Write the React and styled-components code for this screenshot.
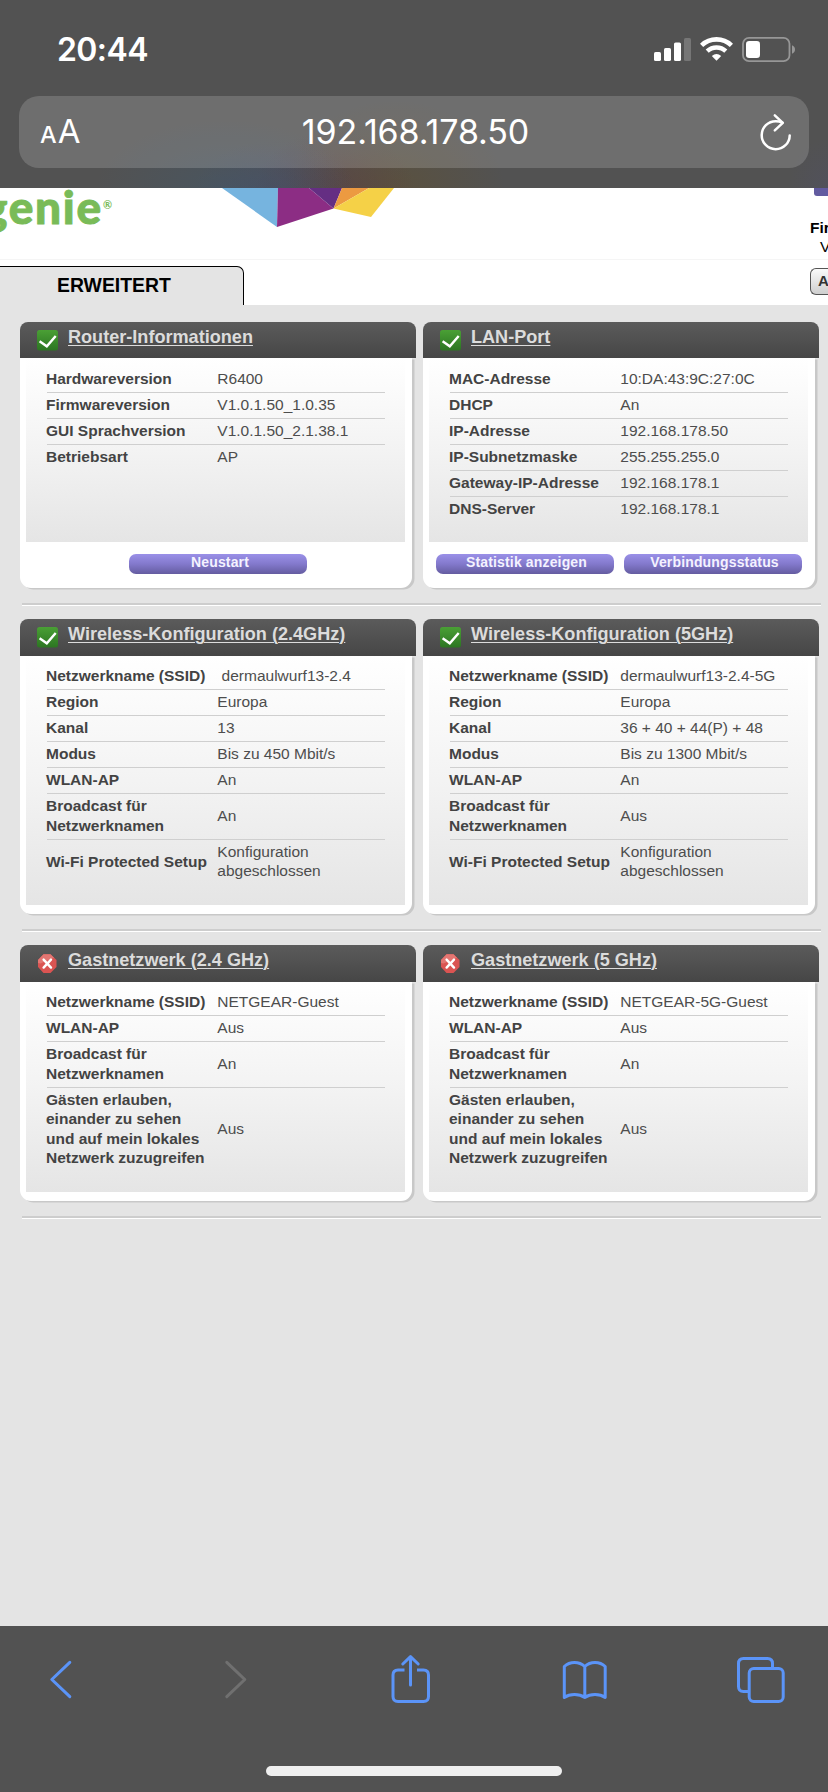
import styled, { createGlobalStyle } from "styled-components";

const GlobalStyle = createGlobalStyle`
  * {
    box-sizing: border-box;
  }
  body {
    margin: 0;
    background: #e4e4e4;
  }
`

const Screen = styled.div`
  width: 828px;
  height: 1792px;
  display: flex;
  flex-direction: column;
  overflow: hidden;
  background: #e4e4e4;
  font-family: "Liberation Sans", Arial, sans-serif;
`

/* ---------- browser top ---------- */

const BrowserTop = styled.div`
  height: 188px;
  flex: none;
  background:
    radial-gradient(ellipse 130px 70px at 225px 190px, rgba(60, 90, 115, 0.4), transparent),
    radial-gradient(ellipse 80px 50px at 275px 190px, rgba(65, 70, 120, 0.3), transparent),
    radial-gradient(ellipse 80px 60px at 335px 190px, rgba(95, 55, 60, 0.4), transparent),
    radial-gradient(ellipse 110px 90px at 395px 190px, rgba(100, 80, 40, 0.45), transparent),
    radial-gradient(ellipse 40px 50px at 828px 188px, rgba(80, 80, 105, 0.4), transparent),
    #525252;
`

const StatusBar = styled.div`
  height: 96px;
  display: flex;
  justify-content: space-between;
  padding: 30px 32px 0 57px;
`

const Clock = styled.div`
  font: 600 32px/40px Inter, sans-serif;
  letter-spacing: -0.6px;
  color: #fff;
`

const StatusIcons = styled.div`
  display: flex;
  height: 40px;
  padding-top: 6px;
`

const AddressBar = styled.div`
  height: 72px;
  margin: 0 19px;
  padding: 0 16px 0 21px;
  border-radius: 20px;
  background: rgba(255, 255, 255, 0.165);
  display: grid;
  grid-template-columns: 60px 1fr 60px;
  align-items: center;
  color: #fff;
  font-family: Inter, sans-serif;
`

const TextSize = styled.div`
  display: flex;
  align-items: baseline;
  gap: 1px;
  font-size: 33px;
  line-height: 70px;
  span {
    font-size: 23.5px;
    font-weight: 500;
  }
`

const Url = styled.div`
  text-align: center;
  font-size: 34px;
  line-height: 70px;
  letter-spacing: -0.1px;
  padding: 0 2px 2px 0;
`

const ReloadSlot = styled.div`
  display: flex;
  justify-content: flex-end;
  padding-bottom: 2px;
`

/* ---------- page header ---------- */

const PageHeader = styled.div`
  height: 71px;
  flex: none;
  display: flex;
  background: #fff;
  overflow: hidden;
`

const Brand = styled.div`
  width: 239px;
  height: 71px;
  margin-left: -17px;
  overflow: hidden;
  font: 900 46px/38px Lato, sans-serif;
  letter-spacing: 1.7px;
  -webkit-text-stroke: 0.9px #79bb58;
  color: #79bb58;
  sup {
    font-size: 11px;
    line-height: 10px;
    vertical-align: 15px;
    font-weight: 700;
    -webkit-text-stroke: 0;
  }
`

const FirmwareBox = styled.div`
  margin-left: auto;
  width: 18px;
  overflow: hidden;
  white-space: nowrap;
  font-family: "Liberation Sans", Arial, sans-serif;
  font-size: 15.5px;
  line-height: 19px;
  color: #000;
`

const CutButton = styled.div`
  height: 8px;
  margin: 0 0 22px 4px;
  border-radius: 0 0 0 3px;
  background: #625ba0;
`

const FirmwareLabel = styled.div`
  font-weight: 700;
`

const FirmwareValue = styled.div`
  padding-left: 10px;
`

const TabBar = styled.div`
  height: 46px;
  flex: none;
  display: flex;
  justify-content: space-between;
  background: #fff;
  border-top: 1px solid #f5f5f5;
  padding-top: 6px;
  overflow: hidden;
`

const Tab = styled.div`
  width: 244px;
  height: 39px;
  padding-left: 57px;
  border-top: 1.5px solid #000;
  border-right: 1.5px solid #000;
  border-top-right-radius: 7px;
  background: #e4e4e4;
  font-size: 19.4px;
  font-weight: 700;
  line-height: 36px;
  color: #000;
`

const LanguageSelect = styled.div`
  width: 18px;
  height: 27px;
  margin-top: 2px;
  padding-left: 7px;
  border: 1.5px solid #555;
  border-right: 0;
  border-radius: 6px 0 0 6px;
  background: linear-gradient(#fafafa, #cfcfcf);
  font: 700 15px/24px "Liberation Sans", Arial, sans-serif;
  color: #333;
  overflow: hidden;
`

/* ---------- cards ---------- */

const Content = styled.div`
  flex: 1;
  padding: 17px 7px 0 20px;
  background: #e4e4e4;
`

const Section = styled.div`
  display: grid;
  grid-template-columns: 395.5px 395.5px;
  column-gap: 7.5px;
  height: ${(props) => props.$height}px;
`

const Rule = styled.div`
  height: 3px;
  margin: 13px 0 13px 2px;
  border-top: 2px solid #cdcdcd;
  border-bottom: 1px solid #fff;
`

const Card = styled.div`
  display: flex;
  flex-direction: column;
`

const CardHeader = styled.div`
  height: ${(props) => props.$height}px;
  flex: none;
  display: flex;
  padding-left: 17px;
  border-radius: 8px 8px 0 0;
  background: linear-gradient(#5b5b5b, #464646);
`

const IconSlot = styled.div`
  width: 31px;
  padding-top: 8px;
`

const CardTitle = styled.a`
  height: 28px;
  font-size: 18.1px;
  font-weight: 700;
  line-height: 30px;
  color: #dcdcdc;
  text-decoration: underline;
  text-decoration-thickness: 1px;
  text-underline-offset: 1.5px;
`

const CardBody = styled.div`
  flex: 1;
  display: flex;
  flex-direction: column;
  margin: 0 3.5px 2px 0;
  padding: 0 7px 0 6px;
  border-radius: 0 0 11px 11px;
  background: #fff;
  box-shadow: 2.5px 1.5px 0.5px #c8c8c8;
`

const Table = styled.div`
  flex: 1;
  padding: 8.9px 20px 0 21px;
  background: linear-gradient(#fff, #f3f3f3 50%, #e5e5e5);
`

const Row = styled.div`
  display: grid;
  grid-template-columns: 170.5px 1fr;
  align-items: center;
  padding: 2px 0 3.5px;
  border-bottom: 1px solid ${(props) => (props.$last ? "transparent" : "#cfcfcf")};
  font-size: 15.5px;
  line-height: 19.5px;
  color: #4d4d4d;
`

const Label = styled.div`
  margin-left: -1px;
  white-space: pre;
  font-weight: 700;
  color: #434343;
`

const Value = styled.div`
  margin-left: -0.2px;
  white-space: pre;
`

const CardFooter = styled.div`
  height: ${(props) => props.$height}px;
  flex: none;
  display: flex;
  justify-content: center;
  align-items: flex-start;
  gap: 10px;
`

const PurpleButton = styled.button`
  width: 178px;
  height: 20px;
  margin-top: 12px;
  margin-left: ${(props) => (props.$single ? 5 : 0)}px;
  padding: 0 0 3px 4px;
  border: 0;
  border-radius: 7px;
  background: linear-gradient(#9a90e8, #8379cc 50%, #645ca0);
  font: 700 14px/17px "Liberation Sans", Arial, sans-serif;
  letter-spacing: 0.15px;
  color: #f4f2ff;
`

/* ---------- browser bottom ---------- */

const BrowserBottom = styled.div`
  height: 166px;
  flex: none;
  background: #525252;
`

const Toolbar = styled.div`
  height: 140px;
  display: flex;
  justify-content: space-between;
  padding: 24px 42px 0 35px;
`

const HomeIndicator = styled.div`
  width: 296px;
  height: 10px;
  margin: 0 auto;
  border-radius: 5px;
  background: #efefef;
`

const SignalIcon = () => (
  <svg width="38" height="28" viewBox="0 0 38 28" fill="#fff">
    <rect x="0" y="16" width="7" height="9" rx="1.6" />
    <rect x="10" y="12" width="7" height="13" rx="1.6" />
    <rect x="20" y="6.5" width="7" height="18.5" rx="1.6" />
    <rect x="30" y="2" width="7" height="23" rx="1.6" fill="#767676" />
  </svg>
)

const WifiIcon = () => (
  <svg width="50" height="28" viewBox="-8 0 50 28" fill="none" stroke="#fff">
    <path d="M1.6 9.3 A21.6 21.6 0 0 1 31.4 9.3" strokeWidth="4.6" />
    <path d="M7.2 15.2 A13.4 13.4 0 0 1 25.8 15.2" strokeWidth="4.4" />
    <path d="M11.8 20 Q16.5 16.2 21.2 20 L16.5 24.7 Z" fill="#fff" stroke="none" />
  </svg>
)

const BatteryIcon = () => (
  <svg width="54" height="28" viewBox="0 0 54 28">
    <rect x="1" y="1.8" width="46.5" height="23.4" rx="6" fill="none" stroke="#979797" strokeWidth="1.8" />
    <rect x="4" y="5" width="14" height="17" rx="3.2" fill="#fff" />
    <path d="M50 9.3 Q53 10.5 53 13.5 Q53 16.5 50 17.7 Z" fill="#979797" />
  </svg>
)

const ReloadIcon = () => (
  <svg width="36" height="40" viewBox="0 0 36 40" fill="none" stroke="#fff" strokeWidth="2.5" strokeLinecap="round" strokeLinejoin="round">
    <path d="M32.7 23.4 A14 14 0 1 1 18.8 9.2 Q22 9.2 25.5 10.6" />
    <path d="M17.8 3.3 L25.8 10.8 L17.8 18.3" />
  </svg>
)

const GenieGem = () => (
  <svg width="176" height="42" viewBox="0 0 176 42">
    <path d="M0 0H56L55 39Z" fill="#76b4df" />
    <path d="M56 0H87L111.5 20.5L55 39Z" fill="#8c2d84" />
    <path d="M87 0H120L111.5 20.5Z" fill="#652e83" />
    <path d="M120 0H147L111.5 20.5Z" fill="#ec9a41" />
    <path d="M147 0H172L149 29L111.5 20.5Z" fill="#f5d147" />
  </svg>
)

const CheckIcon = () => (
  <svg width="21" height="21" viewBox="0 0 21 21">
    <defs>
      <linearGradient id="check" x1="0" y1="0" x2="0" y2="1">
        <stop offset="0" stopColor="#4aa035" />
        <stop offset="1" stopColor="#2c7522" />
      </linearGradient>
    </defs>
    <rect width="21" height="20.5" rx="2.5" fill="url(#check)" />
    <path d="M2.6 11.3 L9.8 16.3 L18.7 6" fill="none" stroke="#fff" strokeWidth="2.4" />
  </svg>
)

const CrossIcon = () => (
  <svg width="21" height="21" viewBox="0 0 21 21">
    <path d="M6.5 1.3H13.5L19.5 7V14L13.5 20H6.5L1 14V7Z" fill="#da5452" />
    <path d="M6.5 1.3H13.5L17 4.7L3.5 10.5L1 10V7Z" fill="#e37672" />
    <path d="M6.6 6.6 L14 14.6 M14 6.6 L6.6 14.6" stroke="#fff" strokeWidth="2.4" strokeLinecap="round" />
  </svg>
)

const ToolIcon = ({ color = "#5b94f8", children }) => (
  <svg width="52" height="60" viewBox="0 0 52 60" fill="none" stroke={color} strokeWidth="3" strokeLinecap="round" strokeLinejoin="round">
    {children}
  </svg>
)

const sections = [
  {
    height: 268,
    header: 36,
    footer: 46,
    cards: [
      {
        title: "Router-Informationen",
        ok: true,
        rows: [
          ["Hardwareversion", "R6400"],
          ["Firmwareversion", "V1.0.1.50_1.0.35"],
          ["GUI Sprachversion", "V1.0.1.50_2.1.38.1"],
          ["Betriebsart", "AP"],
        ],
        buttons: ["Neustart"],
      },
      {
        title: "LAN-Port",
        ok: true,
        rows: [
          ["MAC-Adresse", "10:DA:43:9C:27:0C"],
          ["DHCP", "An"],
          ["IP-Adresse", "192.168.178.50"],
          ["IP-Subnetzmaske", "255.255.255.0"],
          ["Gateway-IP-Adresse", "192.168.178.1"],
          ["DNS-Server", "192.168.178.1"],
        ],
        buttons: ["Statistik anzeigen", "Verbindungsstatus"],
      },
    ],
  },
  {
    height: 297,
    header: 36.5,
    footer: 9.5,
    cards: [
      {
        title: "Wireless-Konfiguration (2.4GHz)",
        ok: true,
        rows: [
          ["Netzwerkname (SSID)", " dermaulwurf13-2.4"],
          ["Region", "Europa"],
          ["Kanal", "13"],
          ["Modus", "Bis zu 450 Mbit/s"],
          ["WLAN-AP", "An"],
          ["Broadcast für\nNetzwerknamen", "An"],
          ["Wi-Fi Protected Setup", "Konfiguration\nabgeschlossen"],
        ],
      },
      {
        title: "Wireless-Konfiguration (5GHz)",
        ok: true,
        rows: [
          ["Netzwerkname (SSID)", "dermaulwurf13-2.4-5G"],
          ["Region", "Europa"],
          ["Kanal", "36 + 40 + 44(P) + 48"],
          ["Modus", "Bis zu 1300 Mbit/s"],
          ["WLAN-AP", "An"],
          ["Broadcast für\nNetzwerknamen", "Aus"],
          ["Wi-Fi Protected Setup", "Konfiguration\nabgeschlossen"],
        ],
      },
    ],
  },
  {
    height: 258,
    header: 36.5,
    footer: 9.5,
    cards: [
      {
        title: "Gastnetzwerk (2.4 GHz)",
        ok: false,
        rows: [
          ["Netzwerkname (SSID)", "NETGEAR-Guest"],
          ["WLAN-AP", "Aus"],
          ["Broadcast für\nNetzwerknamen", "An"],
          ["Gästen erlauben,\neinander zu sehen\nund auf mein lokales\nNetzwerk zuzugreifen", "Aus"],
        ],
      },
      {
        title: "Gastnetzwerk (5 GHz)",
        ok: false,
        rows: [
          ["Netzwerkname (SSID)", "NETGEAR-5G-Guest"],
          ["WLAN-AP", "Aus"],
          ["Broadcast für\nNetzwerknamen", "An"],
          ["Gästen erlauben,\neinander zu sehen\nund auf mein lokales\nNetzwerk zuzugreifen", "Aus"],
        ],
      },
    ],
  },
]

const InfoCard = ({ card, header, footer }) => (
  <Card>
    <CardHeader $height={header}>
      <IconSlot>{card.ok ? <CheckIcon /> : <CrossIcon />}</IconSlot>
      <CardTitle>{card.title}</CardTitle>
    </CardHeader>
    <CardBody>
      <Table>
        {card.rows.map(([label, value], i) => (
          <Row key={label} $last={i === card.rows.length - 1}>
            <Label>{label}</Label>
            <Value>{value}</Value>
          </Row>
        ))}
      </Table>
      <CardFooter $height={footer}>
        {card.buttons && card.buttons.map((text) => (
          <PurpleButton key={text} $single={card.buttons.length === 1}>{text}</PurpleButton>
        ))}
      </CardFooter>
    </CardBody>
  </Card>
)

export default function App() {
  return (
    <Screen>
      <GlobalStyle />
      <BrowserTop>
        <StatusBar>
          <Clock>20:44</Clock>
          <StatusIcons>
            <SignalIcon />
            <WifiIcon />
            <BatteryIcon />
          </StatusIcons>
        </StatusBar>
        <AddressBar>
          <TextSize><span>A</span>A</TextSize>
          <Url>192.168.178.50</Url>
          <ReloadSlot><ReloadIcon /></ReloadSlot>
        </AddressBar>
      </BrowserTop>

      <PageHeader>
        <Brand>genie<sup>®</sup></Brand>
        <GenieGem />
        <FirmwareBox>
          <CutButton />
          <FirmwareLabel>Fir</FirmwareLabel>
          <FirmwareValue>V</FirmwareValue>
        </FirmwareBox>
      </PageHeader>
      <TabBar>
        <Tab>ERWEITERT</Tab>
        <LanguageSelect>A</LanguageSelect>
      </TabBar>

      <Content>
        {sections.map((section) => (
          <div key={section.cards[0].title}>
            <Section $height={section.height}>
              {section.cards.map((card) => (
                <InfoCard key={card.title} card={card} header={section.header} footer={section.footer} />
              ))}
            </Section>
            <Rule />
          </div>
        ))}
      </Content>

      <BrowserBottom>
        <Toolbar>
          <ToolIcon><path d="M34.8 12.3L16.8 29.5L34.8 46.7" /></ToolIcon>
          <ToolIcon color="#707070"><path d="M16.8 12.3L34.8 29.5L16.8 46.7" /></ToolIcon>
          <ToolIcon>
            <path d="M19.5 20H13Q8 20 8 25V46.5Q8 51.5 13 51.5H38.5Q43.5 51.5 43.5 46.5V25Q43.5 20 38.5 20H32" strokeLinecap="butt" />
            <path d="M25.5 35V7M17.8 14L25.5 6.7L33.2 14" />
          </ToolIcon>
          <ToolIcon>
            <path d="M25.8 16.5Q21.5 12.5 15.5 12.5Q9.5 12.5 5.3 16.5V47.5Q9.5 44.5 15.5 44.5Q21.5 44.5 25.8 47.5Q30 44.5 36 44.5Q42 44.5 46.2 47.5V16.5Q42 12.5 36 12.5Q30 12.5 25.8 16.5V47.5" />
          </ToolIcon>
          <ToolIcon>
            <path d="M38.5 17.5V13.5Q38.5 8.5 33.5 8.5H9.5Q4.5 8.5 4.5 13.5V36.5Q4.5 41.5 9.5 41.5H14.5" strokeLinecap="butt" />
            <rect x="15.2" y="18.5" width="34" height="33" rx="4.5" />
          </ToolIcon>
        </Toolbar>
        <HomeIndicator />
      </BrowserBottom>
    </Screen>
  )
}
